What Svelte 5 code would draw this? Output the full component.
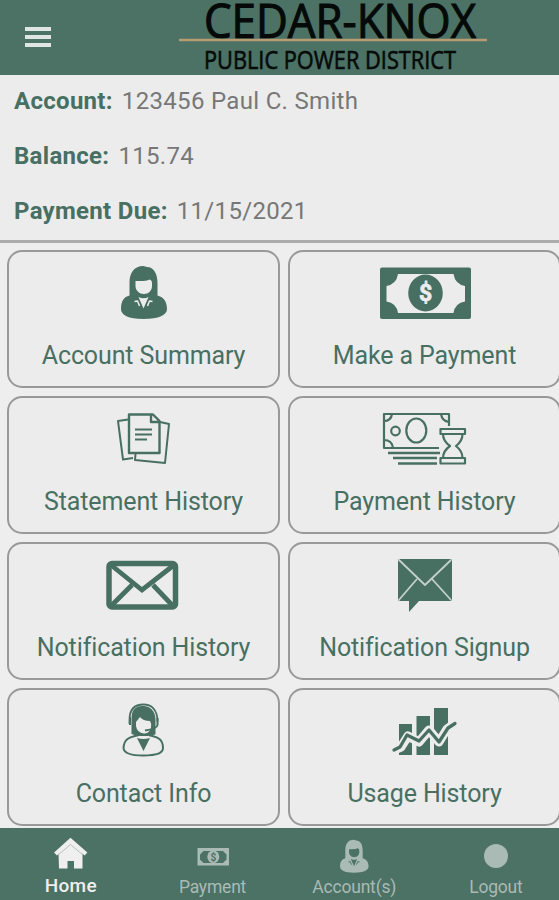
<script>
  const cards = [
    { label: 'Account Summary', icon: 'person', box: '89 255 110 75' },
    { label: 'Make a Payment', icon: 'bill', box: '369 255 110 75' },
    { label: 'Statement History', icon: 'docs', box: '89 401 110 75' },
    { label: 'Payment History', icon: 'history', box: '369 401 110 75' },
    { label: 'Notification History', icon: 'mail', box: '89 547 110 75' },
    { label: 'Notification Signup', icon: 'signup', box: '369 547 110 75' },
    { label: 'Contact Info', icon: 'contact', box: '89 693 110 75' },
    { label: 'Usage History', icon: 'usage', box: '369 693 110 75' }
  ];
  const tabs = [
    { label: 'Home', icon: 'home' },
    { label: 'Payment', icon: 'cash' },
    { label: 'Account(s)', icon: 'user' },
    { label: 'Logout', icon: 'dot' }
  ];
</script>

{#snippet woman(face)}
  <path d="M143.500 266C133 266 129.500 274 129.500 283V295.500C124 297 121 301 121 309C121 315 128 319 143.500 319S167 315 167 309C167 301 163 297 157.500 295.500V283C157.500 274 154 267 147 267Z" fill="currentColor" />
  <path d="M135.500 281Q146 281.500 149.500 279.500Q152 280 152 283V286C152 290.500 148.500 294 144 294S135.500 290.500 135.500 286Z" fill={face} />
  <path d="M138.500 297Q143.500 299.500 148.500 297L143.500 308.500Z" fill={face} />
  <path d="M134.500 301.500L137.500 301L139.500 306M152.500 301.500L149.500 301L147.500 306" fill="none" stroke={face} stroke-width="1.500" />
{/snippet}

<div class="app">
  <header>
    <button class="menu" aria-label="Menu"><i></i><i></i><i></i></button>
    <svg class="logo" width="320" height="75" viewBox="170 0 320 75">
      <text x="204" y="38.200" font-size="47" textLength="272" lengthAdjust="spacingAndGlyphs" stroke="#050a08" stroke-width="1.100">CEDAR-KNOX</text>
      <path d="M179 40H487" stroke="#b69c70" stroke-width="2.500" />
      <text x="204" y="69" font-size="25" textLength="252" lengthAdjust="spacingAndGlyphs" stroke="#050a08" stroke-width=".6">PUBLIC POWER DISTRICT</text>
    </svg>
  </header>

  <section class="info">
    <p><b>Account:</b><span>123456 Paul C. Smith</span></p>
    <p><b>Balance:</b><span>115.74</span></p>
    <p><b>Payment Due:</b><span>11/15/2021</span></p>
  </section>

  <main>
    {#each cards as card}
      <div class="card">
        <svg width="110" height="75" viewBox={card.box} fill="none" stroke-linejoin="round">
          {#if card.icon === 'person'}
            {@render woman('#ececec')}
          {:else if card.icon === 'bill'}
            <rect x="379" y="267.500" width="91" height="51.500" rx="2" fill="currentColor" />
            <path d="M397 274H452.500Q454 284 464 286V301.500Q454 303 452.500 313H397Q395.500 303 385.500 301.500V286Q395.500 284 397 274Z" fill="#ececec" />
            <ellipse cx="424.500" cy="293" rx="17.300" ry="18.500" fill="currentColor" />
            <text x="424.500" y="301" font-size="23" font-weight="700" text-anchor="middle" fill="#ececec" stroke="#ececec" stroke-width=".8">$</text>
          {:else if card.icon === 'docs'}
            <g stroke="currentColor" stroke-width="2">
              <path d="M128 419.500L118 421L123 459.500L133 458M160 422L169 424L165 463L135 460L135.500 454" />
              <path d="M129 414.500H153L159.500 421V453H129ZM151 415V422H159" stroke-width="2.400" />
              <path d="M135 429.500H152M135 434.500H152M135 439.500H147" />
            </g>
          {:else if card.icon === 'history'}
            <g stroke="currentColor" stroke-width="2.200">
              <path d="M448 426V414H383V448H438M383 421Q390 421 391 414M448 422Q441 421 440 414M383 440Q391 440 392 448" />
              <ellipse cx="415.300" cy="430.500" rx="10" ry="12" />
              <circle cx="394.500" cy="431" r="4.300" />
              <path d="M387 453H439M392 458H436M397 463.500H436" stroke-width="2.500" />
              <path d="M439.500 429H464V434H439.500ZM439.500 458H464V463.500H439.500ZM442 434Q442 441 449 446Q442 451 442 458M461.500 434Q461.500 441 455 446Q461.500 451 461.500 458" />
            </g>
          {:else if card.icon === 'mail'}
            <rect x="109" y="563.500" width="66.500" height="43.500" rx="3" stroke="currentColor" stroke-width="5.500" />
            <path d="M111 565L142 590L174 565M111 606L132 585M173 606L153 585" stroke="currentColor" stroke-width="4.800" stroke-linejoin="miter" />
          {:else if card.icon === 'signup'}
            <path d="M399 559H449Q451 559 451 561V599Q451 601 449 601H418L408 612V601H399Q397 601 397 599V561Q397 559 399 559Z" fill="currentColor" />
            <path d="M397 559L424 585L450 560M397 601L416 579M450 600L431 579" stroke="#c5d0cc" stroke-width="1.800" />
          {:else if card.icon === 'contact'}
            <path d="M131.500 734V719C131.500 707 138 706 143.500 706S155.500 710 155.500 720V734.500L148 736H138Z" fill="currentColor" />
            <path d="M136 722L140 717Q143 721 150 721Q152 724 151 728Q149 733.500 144 733.500Q137 733 136 726Z" fill="#ececec" />
            <path d="M129.500 724V720C129.500 708 136 704.500 143.500 704.500S157.500 709 157.500 722" stroke="currentColor" stroke-width="1.800" />
            <path d="M130 717V725M157.500 718V725Q157 729 145 730.500" stroke="currentColor" stroke-width="2" />
            <path d="M138.500 735C134 737 124 736 123.500 748Q124 755.500 143.500 755.500T163 748C163 736 153 737 149 735" stroke="currentColor" stroke-width="2" />
            <path d="M137 738Q143 740 150 738L143.500 751Z" fill="currentColor" />
          {:else}
            <path d="M398 724H411V755H398ZM415.500 716H429V755H415.500ZM433 708H447V755H433Z" fill="currentColor" />
            <path d="M393 750L400 747L407 736L418 742L428 730L438 742L446 729L454 723" stroke="#ececec" stroke-width="9" />
            <path d="M393 750L399 747L406 735L418 741L428 730L438 742L447 728L454 723.500" stroke="currentColor" stroke-width="3.300" stroke-linecap="round" />
          {/if}
        </svg>
        <span>{card.label}</span>
      </div>
    {/each}
  </main>

  <nav>
    {#each tabs as tab, i}
      <div class="tab" class:active={i === 0}>
        {#if tab.icon === 'home'}
          <svg width="36" height="36" viewBox="53 836 36 36">
            <path d="M58.500 853L70.500 842L82.500 853V868.500H74V861H67.500V868.500H59Z" fill="currentColor" />
            <path d="M55.500 854L70.500 840.500L86 854" fill="none" stroke="currentColor" stroke-width="4.200" />
            <path d="M58 855L70.500 844.500L83 855" fill="none" stroke="#a6b5af" stroke-width=".8" />
          </svg>
        {:else if tab.icon === 'cash'}
          <svg width="36" height="36" viewBox="194 838 36 36">
            <rect x="196.500" y="848" width="31.500" height="17.500" fill="currentColor" />
            <path d="M202.500 851H222L225.500 854.500V859.500L222 863H202.500L199 859.500V854.500Z" fill="#4c7165" />
            <ellipse cx="212.300" cy="856.800" rx="6" ry="6.300" fill="currentColor" />
            <text x="212.300" y="860.500" font-size="10" font-weight="700" text-anchor="middle" fill="#4c7165">$</text>
          </svg>
        {:else if tab.icon === 'user'}
          <svg width="36" height="36" viewBox="114.500 263 58 58">{@render woman('#4c7165')}</svg>
        {:else}
          <svg width="36" height="36" viewBox="0 0 36 36"><circle cx="18" cy="18" r="12" fill="currentColor" /></svg>
        {/if}
        <span>{tab.label}</span>
      </div>
    {/each}
  </nav>
</div>

<style>
  :global(body) { margin: 0; }
  .app {
    width: 559px; height: 900px; overflow: hidden;
    display: flex; flex-direction: column;
    background: #ececec; color: #487062;
    font-family: Roboto, sans-serif;
  }
  svg { display: block; flex: none; }
  header {
    box-sizing: border-box; height: 75px; flex: none;
    display: flex; align-items: center;
    padding-left: 25px; background: #4c7165;
  }
  .menu {
    width: 26px; padding: 0; border: 0; background: none;
    display: flex; flex-direction: column; gap: 4px; margin-top: -2px;
  }
  .menu i { height: 4px; background: #dfe5e2; }
  .logo { margin-left: 119px; font-family: "Open Sans", sans-serif; fill: #050a08; }
  .info {
    box-sizing: border-box; height: 168px; flex: none;
    padding: 0 14px; border-bottom: 3px solid #acacac;
  }
  p {
    margin: 0; height: 55px; line-height: 53px; font-size: 24px;
    display: flex; gap: 9px; white-space: nowrap;
  }
  b { font-weight: 700; letter-spacing: .3px; }
  p span { color: #777; letter-spacing: .32px; }
  main {
    height: 585px; flex: none; box-sizing: border-box; padding: 7px 0 0 7px;
    display: grid; grid-template-columns: 273px 273px; grid-auto-rows: 138px;
    gap: 8px; background: #eee;
  }
  .card {
    box-sizing: border-box; border: 2px solid #999; border-radius: 15px;
    background: #ececec; padding-top: 3px;
    display: flex; flex-direction: column; align-items: center;
  }
  .card span {
    margin-top: 11px; line-height: 30px; font-size: 25px;
    letter-spacing: -.12px; white-space: nowrap;
  }
  nav {
    flex: 1; display: grid; grid-template-columns: repeat(4, 141.700px);
    background: #4c7165; color: #a9bbb4;
  }
  .tab { display: flex; flex-direction: column; align-items: center; padding-top: 10px; }
  .tab span { font-size: 17.500px; line-height: 22px; letter-spacing: -.2px; margin-top: 2px; }
  .active { color: #efefef; padding-top: 8px; }
  .tab.active span { font-size: 19px; font-weight: 500; letter-spacing: .3px; margin-top: 3px; }
</style>
